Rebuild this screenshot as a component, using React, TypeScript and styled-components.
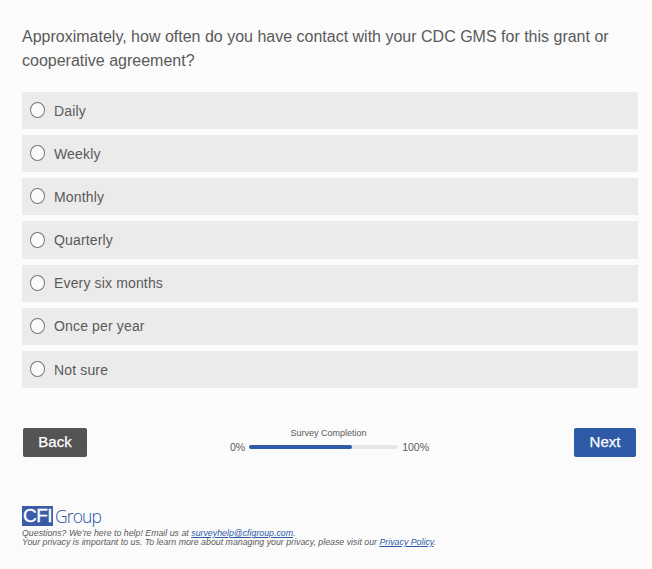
import React from 'react'
import styled, { createGlobalStyle } from 'styled-components'

const GlobalStyle = createGlobalStyle`
  html, body {
    margin: 0;
    padding: 0;
    background: #fbfbfb;
    font-family: "Liberation Sans", Arial, sans-serif;
    color: #5a5a5a;
  }
`

const Page = styled.div`
  width: 652px;
  height: 569px;
  padding: 25px 14px 0 22px;
  box-sizing: border-box;
  overflow: hidden;
`

const Question = styled.h1`
  margin: 0 0 19px;
  font-size: 16px;
  font-weight: 400;
  line-height: 24px;
  color: #5a5a5a;
`

const Options = styled.div`
  display: flex;
  flex-direction: column;
  gap: 6px;
`

const Option = styled.label`
  display: flex;
  align-items: center;
  height: 37.17px;
  padding-left: 8px;
  background: #ebebeb;
  font-size: 14px;
  letter-spacing: 0.15px;
  color: #5a5a5a;
`

const Radio = styled.span`
  width: 13px;
  height: 14px;
  margin: -1px 9px 0 0;
  border: 1px solid #777;
  border-radius: 50%;
  background: #fbfbfb;
`

const Nav = styled.div`
  display: flex;
  align-items: flex-start;
  justify-content: space-between;
  margin-top: 40px;
  padding: 0 2px 0 1px;
`

const NavButton = styled.button<{ $primary?: boolean }>`
  width: ${p => (p.$primary ? '62px' : '64px')};
  height: 29px;
  padding: 0 0 2px;
  border: 0;
  border-radius: 2px;
  background: ${p => (p.$primary ? '#2e5aa8' : '#545454')};
  color: #fff;
  font: 400 15px "Liberation Sans", Arial, sans-serif;
  -webkit-text-stroke: 0.25px #fff;
`

const Progress = styled.div`
  display: flex;
  flex-direction: column;
  align-items: center;
  margin-left: -2px;
  font-size: 9px;
  line-height: 10px;
  color: #5a5a5a;
`

const ProgressLabel = styled.span`
  margin-right: 2px;
`

const ProgressRow = styled.div`
  display: flex;
  align-items: center;
  gap: 4px;
  margin-top: 3px;
  font-size: 10.5px;
  line-height: 12px;
`

const ProgressTrack = styled.div`
  width: 149px;
  height: 4px;
  border-radius: 2px;
  background: #e6e6e6;
`

const ProgressFill = styled.div`
  height: 100%;
  border-radius: 2px;
  background: #2e5aa8;
`

const Footer = styled.footer`
  margin-top: 49px;
  font-size: 8.8px;
  font-style: italic;
  line-height: 9px;
  color: #5a5a5a;

  a {
    color: #2e5aa8;
    text-decoration: underline;
  }
`

const Logo = styled.div`
  display: flex;
  align-items: center;
  height: 20px;
  margin-bottom: 3px;
  font-style: normal;
`

const LogoMark = styled.span`
  display: flex;
  align-items: center;
  justify-content: center;
  width: 31px;
  height: 20px;
  background: #3a5ca8;
  color: #fff;
  font-size: 19px;
  line-height: 20px;
  letter-spacing: -0.5px;
  -webkit-text-stroke: 0.3px #fff;
`

const LogoWord = styled.span`
  margin-left: 2px;
  color: #2a52a2;
  font-family: "Open Sans", sans-serif;
  font-size: 17.5px;
  font-weight: 300;
  line-height: 20px;
  letter-spacing: -0.9px;
`

const choices = ['Daily', 'Weekly', 'Monthly', 'Quarterly', 'Every six months', 'Once per year', 'Not sure']

export default function App() {
  return (
    <Page>
      <GlobalStyle />
      <Question>
        Approximately, how often do you have contact with your CDC GMS for this grant or cooperative agreement?
      </Question>
      <Options>
        {choices.map(c => (
          <Option key={c}>
            <Radio />
            {c}
          </Option>
        ))}
      </Options>
      <Nav>
        <NavButton>Back</NavButton>
        <Progress>
          <ProgressLabel>Survey Completion</ProgressLabel>
          <ProgressRow>
            <span>0%</span>
            <ProgressTrack>
              <ProgressFill style={{ width: '69%' }} />
            </ProgressTrack>
            <span>100%</span>
          </ProgressRow>
        </Progress>
        <NavButton $primary>Next</NavButton>
      </Nav>
      <Footer>
        <Logo>
          <LogoMark>CFI</LogoMark>
          <LogoWord>Group</LogoWord>
        </Logo>
        Questions? We're here to help! Email us at <a href="#">surveyhelp@cfigroup.com</a>.
        <br />
        Your privacy is important to us. To learn more about managing your privacy, please visit our{' '}
        <a href="#">Privacy Policy</a>.
      </Footer>
    </Page>
  )
}
